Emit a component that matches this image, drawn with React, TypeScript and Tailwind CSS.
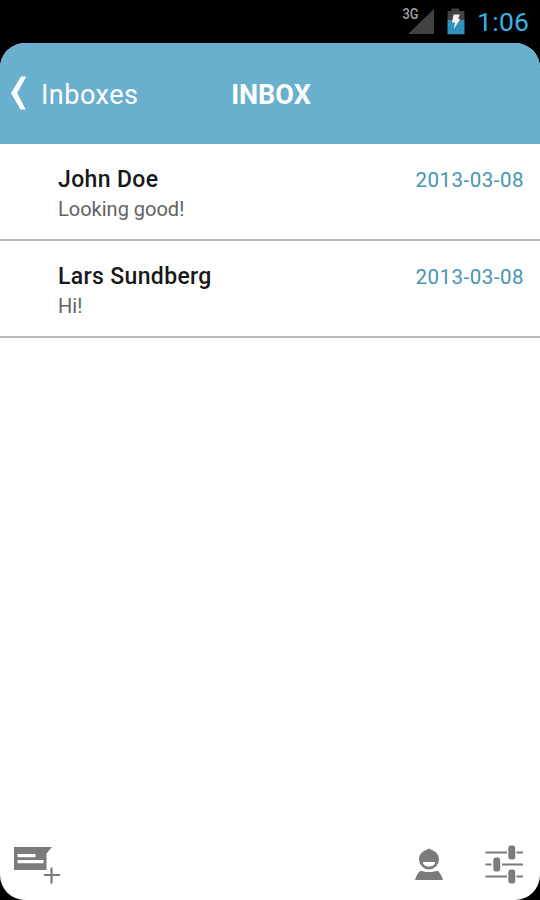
const messages = [
  { name: "John Doe", preview: "Looking good!", date: "2013-03-08" },
  { name: "Lars Sundberg", preview: "Hi!", date: "2013-03-08" },
];

function StatusBar() {
  return (
    <div className="flex h-[43px] shrink-0 items-start justify-end pr-[11px]">
      <svg className="mt-[4px] h-[31px] w-[34px]" viewBox="400 4 34 31">
        <path d="M434 9V34H408Z" fill="#424242" />
        <text x="402.500" y="19.300" fontSize="14" fontWeight="500" fill="#a0a0a0" textLength="16" lengthAdjust="spacingAndGlyphs" fontFamily="Roboto, sans-serif">3G</text>
      </svg>
      <svg className="ml-[13px] mt-[8px] h-[27px] w-[18px]" viewBox="447 8 18 27">
        <path d="M451.500 8.500h7.500v2.500h5.500v9h-17v-9h4Z" fill="#424242" />
        <path d="M447.500 20h17v14.300h-17Z" fill="#3190b8" />
        <path d="M453.500 14.500h6.300l-1.500 4.500h2l-6.500 10 1.200-6.500h-3Z" fill="#f4f4f4" />
      </svg>
      <span className="ml-[12px] mt-[6px] w-[52px] whitespace-nowrap text-[26.500px] leading-[31px] tracking-[0.3px] text-[#33b5e5]">1:06</span>
    </div>
  );
}

function Header() {
  return (
    <header className="grid h-[101px] shrink-0 grid-cols-[1fr_auto_1fr] items-center bg-[#69afce] text-[27px] leading-[32px] text-white">
      <div className="flex items-center pl-[10px]">
        <svg className="h-[35px] w-[17px]" viewBox="10 76 17 35">
          <path d="M21 76.500h5.300L17.200 93l8.500 16.500H20.500L11 93Z" fill="white" />
        </svg>
        <span className="ml-[14px] mt-[2px] tracking-[0.5px]">Inboxes</span>
      </div>
      <h1 className="ml-[2px] mt-[2px] font-bold">INBOX</h1>
      <div />
    </header>
  );
}

export default function App() {
  return (
    <div className="flex h-[900px] w-[540px] flex-col overflow-hidden bg-black font-['Roboto',sans-serif]">
      <StatusBar />
      <div className="flex flex-1 flex-col overflow-hidden rounded-[25px] bg-white">
        <Header />
        <main className="flex-1">
          {messages.map((m) => (
            <div key={m.name} className="flex h-[97px] justify-between border-b-2 border-[#b8b8b8] pl-[58px] pr-[16px] pt-[22px]">
              <div>
                <div className="text-[23px] font-medium leading-[28px] tracking-[0.35px] text-[#181818]">{m.name}</div>
                <div className="mt-px text-[20px] leading-[28px] text-[#626262]">{m.preview}</div>
              </div>
              <div className="text-[20.500px] leading-[28px] tracking-[0.5px] text-[#4795b0]">{m.date}</div>
            </div>
          ))}
        </main>
        <footer className="flex h-[60px] shrink-0 items-start justify-between pl-[13px] pr-[16px] pt-[4px]">
          <svg className="h-[42px] w-[48px]" viewBox="13 844 48 42">
            <path d="M14 847h38l-5.500 6.500V870H14Z" fill="#7b7b7b" />
            <path d="M17.500 854h18v3.300h-18ZM17.500 860h26v3.300h-26Z" fill="white" />
            <path d="M51.500 867.500v16M44 875h16" stroke="#7b7b7b" strokeWidth="2.200" />
          </svg>
          <div className="flex gap-[40px]">
            <svg className="h-[42px] w-[30px]" viewBox="414 844 30 42">
              <path d="M429 848.700c1.300 0 2 .6 2.500 1.300 4.500 1.200 7.500 5 7.500 9.500a10 10 0 0 1-20 0c0-4.500 3-8.300 7.500-9.500.5-.7 1.200-1.300 2.500-1.300Z" fill="#7b7b7b" />
              <path d="M422.700 862h12.600c-.5 3-2.800 4.600-6.300 4.600s-5.800-1.600-6.300-4.600Z" fill="white" />
              <path d="M415 880c1-3.500 2.800-7.500 5.500-9.300 5 1.700 12 1.700 17 0 2.700 1.800 4.500 5.800 5.500 9.300Z" fill="#7b7b7b" />
            </svg>
            <svg className="h-[42px] w-[40px]" viewBox="484 844 40 42">
              <path d="M485.500 852.500H507M516.500 852.500H523M485.500 864.500H491.500M502 864.500H523M485.500 876.500H507M516.500 876.500H523" stroke="#7b7b7b" strokeWidth="2" />
              <rect x="508.300" y="845.500" width="6.900" height="14" rx="2.500" fill="#7b7b7b" />
              <rect x="493.300" y="857.500" width="6.900" height="14" rx="2.500" fill="#7b7b7b" />
              <rect x="508.300" y="869.500" width="6.900" height="14" rx="2.500" fill="#7b7b7b" />
            </svg>
          </div>
        </footer>
      </div>
    </div>
  );
}
